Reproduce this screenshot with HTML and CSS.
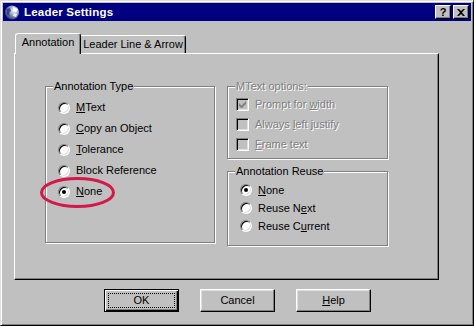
FILE: index.html
```html
<!DOCTYPE html>
<html lang="en">
<head>
    <meta charset="UTF-8">
    <title>Leader Settings</title>
    <link rel="stylesheet" href="styles.css">
</head>
<body>
    <div class="window">
        <div class="titlebar">
            <svg class="app-icon" width="16" height="16" viewBox="0 0 16 16">
                <defs>
                    <radialGradient id="globe" cx="0.65" cy="0.35" r="0.75">
                        <stop offset="0" stop-color="#ffffff"/>
                        <stop offset="0.45" stop-color="#9aa6c8"/>
                        <stop offset="1" stop-color="#1c2a66"/>
                    </radialGradient>
                </defs>
                <circle cx="8" cy="8.5" r="7" fill="url(#globe)"/>
                <path d="M3 5 L6 4 L7 7 L5 9 L6 12 L3 10 Z" fill="#1a2560" opacity="0.7"/>
                <path d="M9 3 L14 5 L12 8 L9 7 Z" fill="#fff"/>
                <path d="M10 9 L13 10 L12 13 L9 12 Z" fill="#e8ecf6"/>
            </svg>
            <span class="title">Leader Settings</span>
            <div class="title-buttons">
                <span class="tbtn">?</span>
                <span class="tbtn">
                    <svg width="8" height="7" viewBox="0 0 8 7">
                        <path d="M0 0h2l2 2 2-2h2L5 3.5 8 7H6L4 5 2 7H0l3-3.5z" fill="#000"/>
                    </svg>
                </span>
            </div>
        </div>

        <div class="client">
            <div class="tabs">
                <div class="tab active">Annotation</div>
                <div class="tab">Leader Line &amp; Arrow</div>
            </div>

            <div class="panel">
                <fieldset class="group group-type">
                    <legend>Annotation Type</legend>
                    <div class="opt"><span class="radio"></span><span><u>M</u>Text</span></div>
                    <div class="opt"><span class="radio"></span><span><u>C</u>opy an Object</span></div>
                    <div class="opt"><span class="radio"></span><span><u>T</u>olerance</span></div>
                    <div class="opt"><span class="radio"></span><span>Block Reference</span></div>
                    <div class="opt">
                        <span class="radio checked"></span><span><u>N</u>one</span>
                        <svg class="circle-mark" width="76" height="32" viewBox="0 0 76 32">
                            <ellipse cx="37.5" cy="15.5" rx="36" ry="14" fill="none" stroke="#d4184b" stroke-width="3"/>
                        </svg>
                    </div>
                </fieldset>

                <div class="col">
                    <fieldset class="group group-mtext disabled">
                        <legend>MText options:</legend>
                        <div class="chk-row">
                            <span class="checkbox">
                                <svg width="7" height="7" viewBox="0 0 7 7">
                                    <path d="M0 2v3l2 2h1l4-4V0L2.5 4.5z" fill="#808080"/>
                                </svg>
                            </span>
                            <span>Prompt for <u>w</u>idth</span>
                        </div>
                        <div class="chk-row"><span class="checkbox"></span><span>Always <u>l</u>eft justify</span></div>
                        <div class="chk-row"><span class="checkbox"></span><span><u>F</u>rame text</span></div>
                    </fieldset>

                    <fieldset class="group group-reuse">
                        <legend>Annotation Reuse</legend>
                        <div class="opt"><span class="radio checked"></span><span><u>N</u>one</span></div>
                        <div class="opt"><span class="radio"></span><span>Reuse N<u>e</u>xt</span></div>
                        <div class="opt"><span class="radio"></span><span>Reuse C<u>u</u>rrent</span></div>
                    </fieldset>
                </div>
            </div>

            <div class="buttons">
                <div class="btn default">OK</div>
                <div class="btn">Cancel</div>
                <div class="btn"><u>H</u>elp</div>
            </div>
        </div>
    </div>
</body>
</html>
```

FILE: styles.css
```css
body {
    margin: 0;
    background-color: #c0c0c0;
    font-family: 'Liberation Sans', Arial, sans-serif;
    font-size: 11px;
    line-height: 13px;
    color: #000;
}
.window {
    width: 474px;
    height: 326px;
    box-sizing: border-box;
    border: 1px solid;
    border-color: #dfdfdf #000 #000 #dfdfdf;
    box-shadow: inset 1px 1px 0 #fff, inset -1px -1px 0 #808080;
    padding: 2px;
    background-color: #c0c0c0;
}
.titlebar {
    height: 18px;
    background-color: #000080;
    display: flex;
    align-items: center;
    padding: 0 2px 0 1px;
}
.app-icon {
    display: block;
    margin-right: 4px;
}
.title {
    color: #fff;
    font-weight: bold;
    font-size: 11.5px;
    letter-spacing: 0.2px;
    flex: 1;
}
.title-buttons {
    display: flex;
    gap: 2px;
}
.tbtn {
    width: 16px;
    height: 14px;
    box-sizing: border-box;
    background-color: #c0c0c0;
    border: 1px solid;
    border-color: #fff #000 #000 #fff;
    box-shadow: inset -1px -1px 0 #808080;
    display: flex;
    align-items: center;
    justify-content: center;
    font-weight: bold;
    font-size: 11px;
    line-height: 11px;
}
.tbtn svg {
    display: block;
}
.client {
    padding: 12px 0 0 11px;
}
.tabs {
    display: flex;
    align-items: flex-end;
    height: 20px;
    margin-left: 1px;
}
.tab {
    box-sizing: border-box;
    height: 18px;
    width: 105px;
    text-align: center;
    padding-top: 2px;
    border-top: 1px solid #fff;
    border-right: 1px solid #000;
    border-top-right-radius: 3px;
    box-shadow: inset -1px 0 0 #808080;
    background-color: #c0c0c0;
}
.tab.active {
    position: relative;
    z-index: 1;
    width: 66px;
    height: 21px;
    margin-bottom: -1px;
    border-left: 1px solid #fff;
    border-top-left-radius: 3px;
}
.panel {
    box-sizing: border-box;
    width: 425px;
    height: 227px;
    border: 1px solid;
    border-color: #fff #000 #000 #fff;
    box-shadow: inset -1px -1px 0 #808080;
    padding: 26px 0 0 30px;
    display: flex;
    align-items: flex-start;
}
.group {
    margin: 0;
    min-width: 0;
    box-sizing: border-box;
    border: 1px solid #808080;
    box-shadow: 1px 1px 0 #fff, inset 1px 1px 0 #fff;
}
.group legend {
    padding: 0 1px;
    background-color: #c0c0c0;
}
.group-type {
    width: 170px;
    padding: 4px 7px 40px;
}
.col {
    margin-left: 12px;
    width: 161px;
    display: flex;
    flex-direction: column;
}
.group-mtext {
    width: 161px;
    padding: 1px 7px 4px;
}
.group-reuse {
    width: 161px;
    margin-top: 6px;
    padding: 3px 7px 10px;
}
.disabled,
.disabled legend {
    color: #808080;
    text-shadow: 1px 1px 0 #fff;
}
.opt {
    position: relative;
    display: flex;
    align-items: center;
    height: 21px;
    padding-left: 5px;
    gap: 6px;
}
.group-reuse .opt {
    height: 18px;
}
.chk-row {
    display: flex;
    align-items: center;
    height: 20px;
    padding-left: 1px;
    gap: 6px;
}
.radio {
    position: relative;
    width: 12px;
    height: 12px;
    box-sizing: border-box;
    border-radius: 50%;
    border: 1px solid;
    border-color: #808080 #fff #fff #808080;
    box-shadow: inset 1px 1px 0 #000, inset -1px -1px 0 #dfdfdf;
    background-color: #fff;
    flex: none;
}
.radio.checked::after {
    content: '';
    position: absolute;
    left: 3px;
    top: 3px;
    width: 4px;
    height: 4px;
    border-radius: 50%;
    background-color: #000;
}
.checkbox {
    width: 13px;
    height: 13px;
    box-sizing: border-box;
    border: 1px solid;
    border-color: #808080 #fff #fff #808080;
    box-shadow: inset 1px 1px 0 #000, inset -1px -1px 0 #dfdfdf;
    background-color: #c0c0c0;
    display: flex;
    align-items: center;
    justify-content: center;
    flex: none;
}
.checkbox svg {
    display: block;
}
.circle-mark {
    position: absolute;
    left: -13px;
    top: -4px;
}
.buttons {
    display: flex;
    gap: 21px;
    margin-top: 9px;
    padding-left: 90px;
}
.btn {
    position: relative;
    width: 75px;
    height: 23px;
    box-sizing: border-box;
    border: 1px solid;
    border-color: #fff #000 #000 #fff;
    box-shadow: inset -1px -1px 0 #808080, inset 1px 1px 0 #dfdfdf;
    display: flex;
    align-items: center;
    justify-content: center;
}
.btn.default {
    border-color: #000;
    box-shadow: inset 1px 1px 0 #fff, inset -1px -1px 0 #000, inset -2px -2px 0 #808080;
}
.btn.default::after {
    content: '';
    position: absolute;
    left: 3px;
    top: 3px;
    right: 3px;
    bottom: 3px;
    border: 1px dotted #000;
}
```
